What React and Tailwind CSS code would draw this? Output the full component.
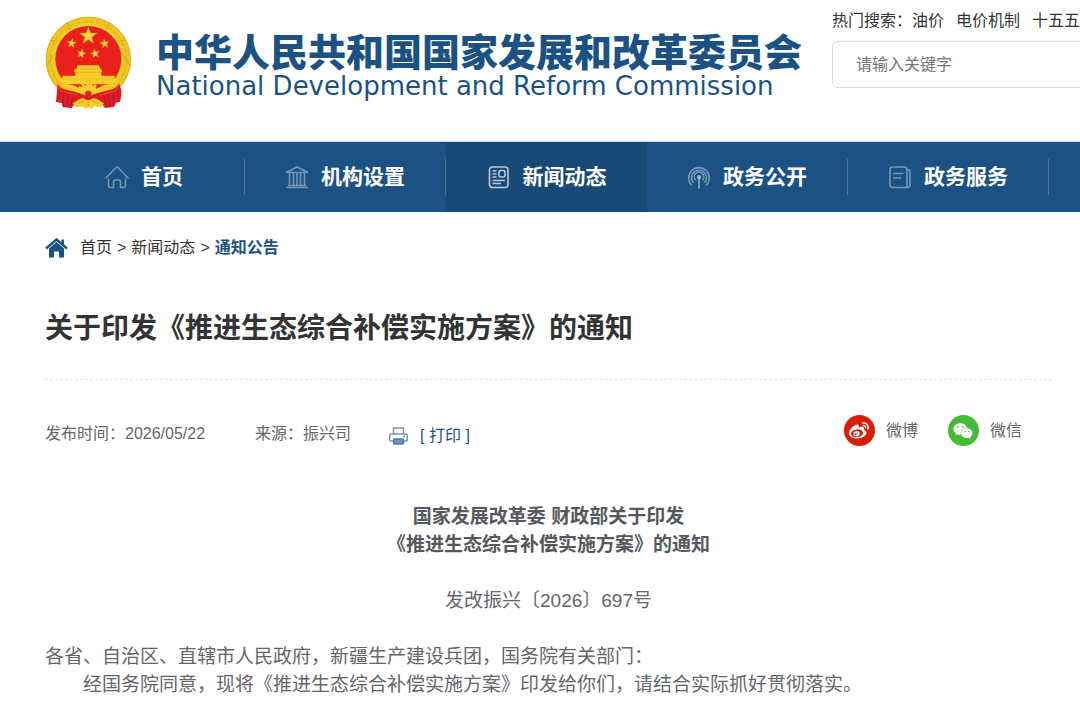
import React from "react";
import { FaWeibo, FaWeixin } from "react-icons/fa";

function starPoints(cx, cy, r, rotate = 0) {
  return Array.from({ length: 10 }, (_, i) => {
    const radius = i % 2 ? r * 0.4 : r;
    const a = ((i * 36 - 90 + rotate) * Math.PI) / 180;
    return `${(cx + radius * Math.cos(a)).toFixed(1)},${(cy + radius * Math.sin(a)).toFixed(1)}`;
  }).join(" ");
}

function Emblem() {
  return (
    <svg className="h-[94px] w-[87px] shrink-0" viewBox="45 34 261 282" aria-hidden="true">
      <circle cx="175" cy="164" r="128" fill="#f1c524" />
      <circle cx="175" cy="164" r="126" fill="none" stroke="#e3b01e" strokeWidth="3" />
      <circle cx="175" cy="164" r="114" fill="none" stroke="#e4b422" strokeWidth="4" strokeDasharray="14 6" />
      <circle cx="175" cy="164" r="103" fill="none" stroke="#f6d534" strokeWidth="5" />
      <path d="M48 184l28-40M302 184l-28-40M60 106l26 4M290 106l-26 4M112 53l8 24M238 53l-8 24" stroke="#d8a31c" strokeWidth="3" />
      <circle cx="175" cy="163" r="99" fill="#e9201b" />
      <g fill="#f9d83a" stroke="#e8bb24" strokeWidth="1">
        <polygon points={starPoints(175, 94, 27)} />
        <polygon points={starPoints(125, 116, 14, 8)} />
        <polygon points={starPoints(224, 117, 14, -8)} />
        <polygon points={starPoints(154, 147, 14, 12)} />
        <polygon points={starPoints(195, 147, 14, -12)} />
      </g>
      <path d="M143 182h64l4 11h-72zM134 193h80l3 9h-86zM136 201h78v14h-78z" fill="#f7cd2c" />
      <path d="M136 203h78M139 193h72" stroke="#dfa51b" strokeWidth="2" />
      <path d="M98 213h155l5 26H92z" fill="#f9cf29" />
      <path d="M99 223h152" stroke="#e6b322" strokeWidth="2" />
      <path d="M133 225v8M217 225v8M152 226v7M198 226v7M170 226v7M180 226v7" stroke="#dda821" strokeWidth="2" />
      <path d="M82 227c26 13 50 12 70 32l-10 14-52-16z" fill="#f2c321" />
      <path d="M268 227c-26 13-50 12-70 32l10 14 52-16z" fill="#f2c321" />
      <path d="M83 236c7 19 30 21 54 26 15 2 28 12 38 12s23-10 38-12c24-5 47-7 54-26l8 24-4 30-14 5-5 12-27 3-14-19H139l-14 19-26-2-4-13-17-3z" fill="#dd1d23" />
      <path d="M122 240q26 4 36 24l-24-4q-18-10-40-18zM228 240q-26 4-36 24l24-4q18-10 40-18z" fill="#f6ca27" />
      <path d="M84 242c10 24 35 22 57 29M266 242c-10 24-35 22-57 29" stroke="#f04439" strokeWidth="3" fill="none" />
      <path d="M88 263l-5 29M101 269l-3 34M115 273l-4 33M129 275l-7 28M262 263l5 29M249 269l3 34M235 273l4 33M221 275l7 28" stroke="#b91526" strokeWidth="3" />
      <path d="M147 265a28 26 0 0 1 56 0l-28 8z" fill="#f8d12b" />
      <path d="M144 265a31 29 0 0 1 62 0" fill="none" stroke="#f8d12b" strokeWidth="7" strokeDasharray="8 5" />
      <circle cx="175" cy="268" r="10" fill="#df231d" />
      <path d="M128 296c13-5 18-16 32-15 7 1 10 5 15 5s8-4 15-5c14-1 19 10 32 15l-10 12-20-3-7 8-10-6-10 6-7-8-20 3z" fill="#f8cb27" />
      <path d="M144 296l20-6M206 296l-20-6M175 288v18" stroke="#dfa922" strokeWidth="3" />
      <path d="M160 271l15 8 15-8-8 14h-14z" fill="#c81a25" />
    </svg>
  );
}

const iconProps = {
  className: "size-6 shrink-0",
  viewBox: "0 0 24 24",
  fill: "none",
  stroke: "currentColor",
  strokeWidth: 1.6,
  "aria-hidden": true,
};

function HomeLine() {
  return (
    <svg {...iconProps}>
      <path d="M1 13L11 2.500q1-1 2 0l10 10.500M3.500 14v6.500q0 2 2 2h3v-5.500q0-2 2-2h3q2 0 2 2v5.500h3q2 0 2-2V14" strokeLinecap="round" />
    </svg>
  );
}

function Institution() {
  return (
    <svg {...iconProps}>
      <path d="M1 7.500L12 2l11 5.500zM1 22.500h22M3 20.500h18M4.500 8v12M8.500 8v12M12 8v12M15.500 8v12M19.500 8v12" />
    </svg>
  );
}

function NewsIcon() {
  return (
    <svg {...iconProps}>
      <rect x="2.500" y="2" width="18.500" height="20.500" rx="3" />
      <rect x="12" y="5.500" width="6" height="6.500" rx="1.500" />
      <path d="M5.500 6h4M5.500 9h4M5.500 12h4M5.500 15.500h12.500M5.500 18.500h8.500" />
    </svg>
  );
}

function Broadcast() {
  return (
    <svg {...iconProps}>
      <path d="M5 20.500A10.300 10.300 0 1 1 19 20.500M6.500 17.800A7.500 7.500 0 1 1 17.500 17.800M8.600 15.300A4.800 4.800 0 1 1 15.400 15.300" />
      <circle cx="12" cy="12" r="1.500" fill="currentColor" />
      <path d="M12 13v10.500" strokeWidth="2" />
    </svg>
  );
}

function Ledger() {
  return (
    <svg {...iconProps}>
      <path d="M4.500 2h12q2.500 0 2.500 2.500v18H4.500q-2.500 0-2.500-2.500v-15.500q0-2.500 2.500-2.500zM19 5h3v15q0 2.500-3 2.500M5 8.500h10.500M5 13h8" />
    </svg>
  );
}

function HomeSolid() {
  return (
    <svg className="h-5 w-[23px] shrink-0" viewBox="0 0 23 20" aria-hidden="true">
      <path d="M4 10.500l7.500-6.500L19 10.500v9h-5V13.500H9v6H4z" fill="#1b5283" />
      <path d="M1 10.500L11.500 1.500 22 10.500" fill="none" stroke="#1b5283" strokeWidth="2.400" />
      <path d="M16.500 1.500H19v5.500l-2.500-2z" fill="#1b5283" />
    </svg>
  );
}

function PrinterIcon() {
  return (
    <svg className="h-[18px] w-[19px] shrink-0" viewBox="0 0 19 18" fill="none" stroke="#6f94b6" strokeWidth="1.400" aria-hidden="true">
      <path d="M4.500 7V1h10v6" />
      <path d="M4.500 14H2q-1.300 0-1.300-1.300V8.500Q.700 7 2.200 7h14.600q1.500 0 1.500 1.500v4.200q0 1.300-1.300 1.300h-2.500" />
      <rect x="4.500" y="12" width="10" height="5" rx="1" fill="#6f93b6" stroke="#4d7aa4" />
      <path d="M14 9.500h2" />
    </svg>
  );
}

const navItems = [
  { label: "首页", Icon: HomeLine },
  { label: "机构设置", Icon: Institution },
  { label: "新闻动态", Icon: NewsIcon, active: true },
  { label: "政务公开", Icon: Broadcast },
  { label: "政务服务", Icon: Ledger },
];

const shares = [
  { label: "微博", Icon: FaWeibo, color: "bg-[#d81e06]" },
  { label: "微信", Icon: FaWeixin, color: "bg-[#45bb36]" },
];

export default function App() {
  return (
    <div className="min-h-screen overflow-x-hidden bg-white font-['Liberation_Sans','Noto_Sans_CJK_SC',sans-serif] text-base text-[#333]" lang="zh-CN">
      <header className="flex items-start overflow-hidden pb-[31px] pl-[45px]">
        <a href="#" className="mt-4 flex shrink-0 items-start gap-6 text-[#1b5283]">
          <Emblem />
          <span className="block pt-4">
            <span className="block font-['Noto_Sans_CJK_SC',sans-serif] text-[38px] leading-9 font-black whitespace-nowrap">中华人民共和国国家发展和改革委员会</span>
            <span className="block pt-0.5 font-['DejaVu_Sans',sans-serif] text-[26px] leading-8 whitespace-nowrap">National Development and Reform Commission</span>
          </span>
        </a>
        <div className="ml-auto w-[248px] shrink-0 overflow-hidden pt-[9px]">
          <div className="flex gap-3 leading-6 whitespace-nowrap">
            <span>热门搜索：<a href="#">油价</a></span>
            <a href="#">电价机制</a>
            <a href="#">十五五</a>
          </div>
          <input
            type="text"
            aria-label="搜索关键字"
            placeholder="请输入关键字"
            className="mt-2 h-[47px] w-[360px] rounded-md border border-[#d9d9d9] px-[23px] text-base outline-none placeholder:text-[#757575]"
          />
        </div>
      </header>

      <nav className="overflow-hidden border-t border-[#c9d6e2] bg-[#1b5283] pl-11">
        <ul className="flex">
          {navItems.map(({ label, Icon, active }) => (
            <li key={label} className={active ? "flex w-[201px] shrink-0 items-center bg-[#174a77]" : "flex w-[201px] shrink-0 items-center"}>
              <a href="#" className="flex h-[70px] flex-1 items-center justify-center gap-3 text-[21px] font-bold text-white">
                <span className={active ? "text-white/70" : "text-white/40"}><Icon /></span>
                {label}
              </a>
              {!active && <span className="h-9 w-px bg-[#4a769d]" />}
            </li>
          ))}
        </ul>
      </nav>

      <main className="pr-7 pl-[45px]">
        <div className="flex items-center pt-6 leading-6">
          <HomeSolid />
          <div className="ml-3 flex gap-[5px] whitespace-nowrap">
            <a href="#">首页</a>
            <span>&gt;</span>
            <a href="#">新闻动态</a>
            <span>&gt;</span>
            <a href="#" className="font-bold text-[#1b5283]">通知公告</a>
          </div>
        </div>

        <h1 className="mt-[49px] border-b border-dashed border-[#e2e2e2] pb-[30px] text-[28px] leading-10 font-bold">
          关于印发《推进生态综合补偿实施方案》的通知
        </h1>

        <div className="flex items-start justify-between pt-[35px] pr-[30px] text-[#666]">
          <div className="flex pt-[3px] leading-8">
            <span>发布时间：2026/05/22</span>
            <span className="ml-[50px]">来源：振兴司</span>
            <button type="button" className="ml-[38px] flex items-center gap-3 pt-0.5 text-[#1b5283]">
              <PrinterIcon />
              [ 打印 ]
            </button>
          </div>
          <div className="flex gap-[30px]">
            {shares.map(({ label, Icon, color }) => (
              <a key={label} href="#" className="flex items-center gap-[11px]">
                <span className={`${color} flex size-[31px] items-center justify-center rounded-full text-white`}>
                  <Icon className="size-5" />
                </span>
                {label}
              </a>
            ))}
          </div>
        </div>

        <article className="pt-[51px] text-[19px] leading-7 text-[#64666a]">
          <h2 className="text-center font-bold text-[#55585e]">
            国家发展改革委 财政部关于印发<br />《推进生态综合补偿实施方案》的通知
          </h2>
          <p className="mt-7 text-center">发改振兴〔2026〕697号</p>
          <p className="mt-7">各省、自治区、直辖市人民政府，新疆生产建设兵团，国务院有关部门：</p>
          <p className="indent-[38px]">经国务院同意，现将《推进生态综合补偿实施方案》印发给你们，请结合实际抓好贯彻落实。</p>
        </article>
      </main>
    </div>
  );
}
